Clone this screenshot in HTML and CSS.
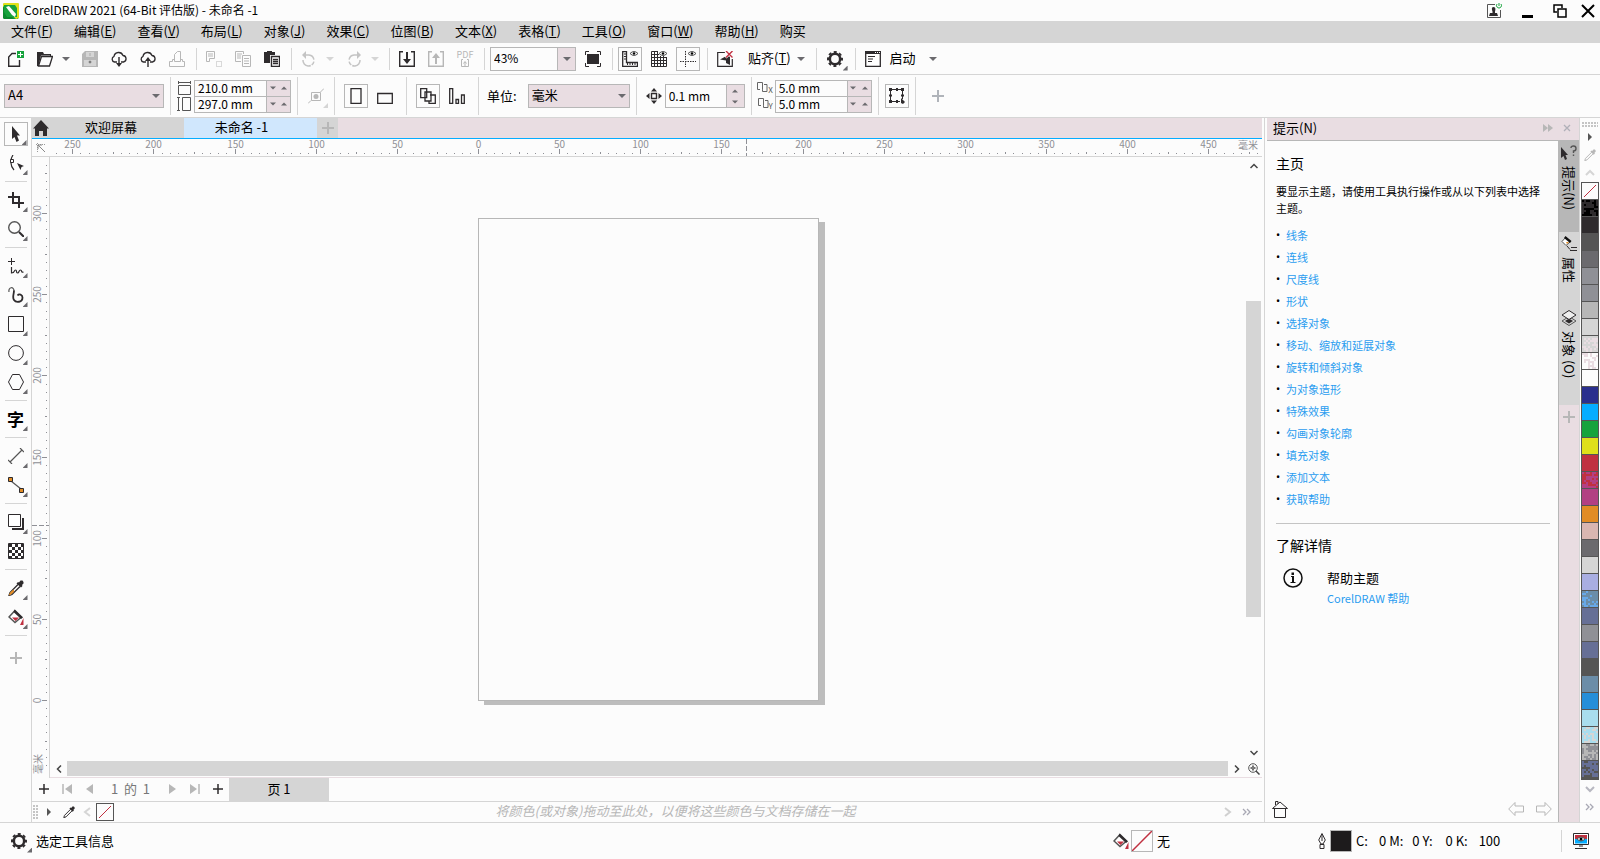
FILE: index.html
```
<!DOCTYPE html>
<html lang="zh-CN">
<head>
    <meta charset="utf-8">
    <meta name="viewport" content="width=device-width, initial-scale=1.0">
    <title>CorelDRAW 2021</title>
    <link rel="stylesheet" href="styles.css">
</head>

<body>
    <svg class="symbols" aria-hidden="true">
        <symbol id="gear" viewBox="0 0 16 16">
            <circle cx="8" cy="8" r="5.200" fill="none" stroke="#2e2b2d" stroke-width="2.600" />
            <circle cx="8" cy="8" r="7" fill="none" stroke="#2e2b2d" stroke-width="2" stroke-dasharray="3 2.500" stroke-dashoffset="1.500" />
        </symbol>
        <symbol id="bucket" viewBox="0 0 16 16">
            <path d="M7 1.500L1 8l6 5.500L13.500 8z" fill="#fff" stroke="#555" stroke-width="1.500" />
            <path d="M6.500 0.500L15 8.500l-2 1.500L5.500 3z" fill="#2e2b2d" />
            <path d="M4 8.500h7L7.500 12zM15.500 9v7H12z" fill="#c03040" />
        </symbol>
        <symbol id="down" viewBox="0 0 8 8">
            <path d="M0 2h8L4 6z" fill="currentColor" />
        </symbol>
        <symbol id="up" viewBox="0 0 8 8">
            <path d="M0 6h8L4 2z" fill="currentColor" />
        </symbol>
        <symbol id="dropper" viewBox="0 0 16 16">
            <path d="M10 4.500L2 12.500l-1 3 3-1 8-8" fill="none" stroke="currentColor" stroke-width="1.300" />
            <path d="M8.500 3.500L10 2l1 .5L12.500.5h2L15.500 2v1.500L14 5l.5 1L13 7.500z" fill="currentColor" />
        </symbol>
        <symbol id="dup" viewBox="0 0 11 12">
            <path d="M3 7.500H.5v-7h5v7H5M7 2.500h3v7H5.500v-2" fill="none" stroke="#666" />
        </symbol>
    </svg>

    <header class="titlebar">
        <svg width="16" height="16" viewBox="0 0 16 16">
            <path d="M1 0h14l1 2v12l-1 2H1l-1-2V2z" fill="#16a33c" />
            <path d="M0 3V1l1-1h14l1 1v14l-3 1z" fill="#dfe01a" />
            <path d="M0 4l11 12H1l-1-1z" fill="#0b8a2e" />
            <path d="M1 2h11l2 3v9H4L1 9z" fill="#16a33c" />
            <path d="M3 4l3-1 7 8-1 3-3-2z" fill="#fcfcfc" />
        </svg>
        <h1>CorelDRAW 2021 (64-Bit 评估版) - 未命名 -1</h1>
        <button class="win" aria-label="账户"><svg width="16" height="16" viewBox="0 0 16 16">
                <path d="M9 1.500H1.500v13h13V7" fill="none" stroke="#555" />
                <path d="M7.500 4C5 4 6 7 6.500 8.500V10H4l-1 3h9l-1-3H9V8.500C9.500 7 10 4 7.500 4z" fill="#2e2b2d" />
                <path d="M13 0v3M11 1a2.500 2.500 0 1 0 4 0" fill="none" stroke="#16a33c" />
            </svg></button>
        <button class="win" aria-label="最小化"><svg width="16" height="16" viewBox="0 0 16 16">
                <path d="M3 12h11v3H3z" />
            </svg></button>
        <button class="win" aria-label="还原"><svg width="16" height="16" viewBox="0 0 16 16">
                <path d="M5 9H2V2h8v3M6 6h8v8H6z" fill="none" stroke="#000" stroke-width="1.500" />
            </svg></button>
        <button class="win close" aria-label="关闭"><svg width="16" height="16" viewBox="0 0 16 16">
                <path d="M2 2l12 12M14 2L2 14" stroke="#000" stroke-width="2" />
            </svg></button>
    </header>

    <nav class="menubar">
        <button>文件(<u>F</u>)</button>
        <button>编辑(<u>E</u>)</button>
        <button>查看(<u>V</u>)</button>
        <button>布局(<u>L</u>)</button>
        <button>对象(<u>J</u>)</button>
        <button>效果(<u>C</u>)</button>
        <button>位图(<u>B</u>)</button>
        <button>文本(<u>X</u>)</button>
        <button>表格(<u>T</u>)</button>
        <button>工具(<u>O</u>)</button>
        <button>窗口(<u>W</u>)</button>
        <button>帮助(<u>H</u>)</button>
        <button>购买</button>
    </nav>

    <div class="toolbar">
        <button class="btn" aria-label="新建"><svg width="16" height="16" viewBox="0 0 16 16">
                <path d="M8 2.500H4L.7 6v9.300h10.800V9" fill="none" stroke="#2e2b2d" stroke-width="1.400" />
                <path d="M9 0h7v7H9z" fill="#16a33c" />
                <path d="M12.500 1v5M10 3.500h5" stroke="#fff" />
            </svg></button>
        <button class="btn" aria-label="打开"><svg width="16" height="16" viewBox="0 0 16 16">
                <path d="M0 1h6l1 2h7v3h-1V4.500H4L1.500 15H0z" fill="#2e2b2d" />
                <path d="M4.500 5.500h11l-3 9.500h-11z" fill="none" stroke="#2e2b2d" stroke-width="1.300" />
            </svg></button>
        <button class="drop" aria-label="最近文件"><svg width="8" height="8"><use href="#down" /></svg></button>
        <button class="btn" aria-label="保存"><svg width="16" height="16" viewBox="0 0 16 16">
                <path d="M3 0h13v16H0V3z" fill="#b7b7b7" />
                <path d="M4 1h8v5H4zM2 9h12v6H2z" fill="#d5d5d5" />
                <path d="M8 2v3M7 10h2v2H7z" stroke="#aaa" />
            </svg></button>
        <button class="btn" aria-label="从云端打开"><svg width="16" height="16" viewBox="0 0 16 16">
                <path d="M6 11H3.500a3 3 0 0 1-.5-5.700A4.700 4.700 0 0 1 12 4.500a3.300 3.300 0 0 1 .5 6.500H10" fill="none" stroke="#2e2b2d" stroke-width="1.300" />
                <path d="M7.300 6h1.400v6H11l-3 4-3-4h2.300z" fill="#2e2b2d" />
            </svg></button>
        <button class="btn" aria-label="保存到云端"><svg width="16" height="16" viewBox="0 0 16 16">
                <path d="M6 11H3.500a3 3 0 0 1-.5-5.700A4.700 4.700 0 0 1 12 4.500a3.300 3.300 0 0 1 .5 6.500H10" fill="none" stroke="#2e2b2d" stroke-width="1.300" />
                <path d="M7.300 16h1.400v-6H11L8 6l-3 4h2.300z" fill="#2e2b2d" />
            </svg></button>
        <button class="btn" aria-label="打印"><svg width="16" height="16" viewBox="0 0 16 16">
                <path d="M5.500 10.500v-7l3-3h3v10h-6M5.500 8.500h-2v2h-3v5h15v-5h-2v-2h-2" fill="none" stroke="#b7b7b7" />
            </svg></button>
        <span class="sep"></span>
        <button class="btn" aria-label="剪切"><svg width="16" height="16" viewBox="0 0 16 16">
                <path d="M.5.500h8v7h-5v3h-3zM2 3h5M2 5h5" fill="none" stroke="#b7b7b7" />
                <path d="M10.500 10.500h5v5h-5z" fill="none" stroke="#b7b7b7" stroke-dasharray="1 1" />
            </svg></button>
        <button class="btn" aria-label="复制"><svg width="16" height="16" viewBox="0 0 16 16">
                <path d="M6 10.500H.5V.5h8V3M2 3h5M2 5h4M2 7h4M7.500 4.500h8v11h-8zM9 7.500h5M9 10h5M9 12.500h5" fill="none" stroke="#b7b7b7" />
            </svg></button>
        <button class="btn" aria-label="粘贴"><svg width="16" height="16" viewBox="0 0 16 16">
                <path d="M0 1h3V0h5v1h3v3H6v8H0z" fill="#2e2b2d" />
                <path d="M7.500 5.500h8v10h-8zM9 8.500h5M9 10.500h5M9 12.500h5" fill="#fff" stroke="#2e2b2d" stroke-width="1.400" />
            </svg></button>
        <span class="sep"></span>
        <button class="btn" aria-label="撤消"><svg width="16" height="16" viewBox="0 0 16 16">
                <path d="M3 4h5a5.500 5.500 0 1 1-6 5" fill="none" stroke="#c4c4c4" stroke-width="1.500" stroke-dasharray="12 2 4 1" />
                <path d="M5 0v8L1 4z" fill="#c4c4c4" />
            </svg></button>
        <button class="drop off" aria-label="撤消列表"><svg width="8" height="8"><use href="#down" /></svg></button>
        <button class="btn" aria-label="重做"><svg width="16" height="16" viewBox="0 0 16 16">
                <path d="M13 4H8a5.500 5.500 0 1 0 6 5" fill="none" stroke="#c4c4c4" stroke-width="1.500" stroke-dasharray="12 2 4 1" />
                <path d="M11 0v8l4-4z" fill="#c4c4c4" />
            </svg></button>
        <button class="drop off" aria-label="重做列表"><svg width="8" height="8"><use href="#down" /></svg></button>
        <span class="sep"></span>
        <button class="btn" aria-label="导入"><svg width="16" height="16" viewBox="0 0 16 16">
                <path d="M4 .7H.7v14.600h14.600V.7H12" fill="none" stroke="#2e2b2d" stroke-width="1.400" />
                <path d="M7 1h2v7h3l-4 5-4-5h3z" fill="#2e2b2d" />
            </svg></button>
        <button class="btn" aria-label="导出"><svg width="16" height="16" viewBox="0 0 16 16">
                <path d="M4 .7H.7v14.600h14.600V.7H12" fill="none" stroke="#b7b7b7" stroke-width="1.400" />
                <path d="M7 13h2V7h3L8 2 4 7h3z" fill="#b7b7b7" />
            </svg></button>
        <button class="btn pdf" aria-label="发布为 PDF"><span>PDF</span><svg width="8" height="8" viewBox="0 0 8 8">
                <path d="M2 .5H.5v7h7v-7H6M4 7V3M2.500 4.500L4 2.500l1.500 2" fill="none" stroke="#b7b7b7" />
            </svg></button>
        <span class="sep"></span>
        <div class="combo zoom">
            <input type="text" value="43%" aria-label="缩放级别">
            <button aria-label="缩放列表"><svg width="8" height="8"><use href="#down" /></svg></button>
        </div>
        <button class="btn" aria-label="全屏预览"><svg width="16" height="16" viewBox="0 0 16 16">
                <path d="M2 3h12v10H2z" fill="#2e2b2d" />
                <path d="M4 .5H.5V4M12 .5h3.500V4M4 15.500H.5V12M12 15.500h3.500V12" fill="none" stroke="#2e2b2d" />
            </svg></button>
        <span class="sep"></span>
        <button class="btn boxed" aria-label="显示标尺"><svg width="16" height="16" viewBox="0 0 16 16">
                <path d="M.7.500h3.800v11h11v3.800H.7z" fill="none" stroke="#2e2b2d" stroke-width="1.300" />
                <path d="M2 3h2M2 5.500h2M2 8h2M5.500 12v2M8 12v2M10.500 12v2M13 12v2" stroke="#2e2b2d" />
                <path d="M8 2.500q4-4 8 0-4 4-8 0z" fill="none" stroke="#555" /><circle cx="12" cy="2.500" r="1.200" />
            </svg></button>
        <button class="btn" aria-label="显示网格"><svg width="16" height="16" viewBox="0 0 16 16">
                <path d="M7 .5H.5v15h15V6M3.500 0v16M6.500 0v16M9.500 5v11M12.500 5v11M0 3.500h8M0 6.500h16M0 9.500h16M0 12.500h16" fill="none" stroke="#2e2b2d" />
                <path d="M8 2.500q4-4 8 0-4 4-8 0z" fill="#fff" stroke="#555" /><circle cx="12" cy="2.500" r="1.200" />
            </svg></button>
        <button class="btn boxed" aria-label="显示辅助线"><svg width="16" height="16" viewBox="0 0 16 16">
                <path d="M5.500 0v16M0 10.500h16" stroke="#2e2b2d" stroke-dasharray="1.500 1" />
                <path d="M8 2.500q4-4 8 0-4 4-8 0z" fill="none" stroke="#555" /><circle cx="12" cy="2.500" r="1.200" />
            </svg></button>
        <span class="sep"></span>
        <button class="btn" aria-label="关闭贴齐"><svg width="16" height="16" viewBox="0 0 16 16">
                <path d="M8 1.500H.7v13.800h14.600V8" fill="none" stroke="#2e2b2d" stroke-width="1.200" />
                <path d="M3 8.500L13 3v11L9 12V9.500z" fill="#2e2b2d" />
                <path d="M8.500 0l7 6.500M15.500 0l-7 6.500" stroke="#fff" stroke-width="3" />
                <path d="M9 0l6.500 6.500M15.500 0L9 6.500" stroke="#c03040" stroke-width="1.400" />
            </svg></button>
        <button class="textbtn">贴齐(<u>T</u>)</button>
        <button class="drop" aria-label="贴齐选项"><svg width="8" height="8"><use href="#down" /></svg></button>
        <span class="sep"></span>
        <button class="btn wide fly" aria-label="选项"><svg width="16" height="16"><use href="#gear" /></svg></button>
        <span class="sep"></span>
        <button class="btn" aria-label="应用程序启动器"><svg width="16" height="16" viewBox="0 0 16 16">
                <path d="M.7.700h14.600v14.600H.7z" fill="#fff" stroke="#2e2b2d" stroke-width="1.300" />
                <path d="M0 0h16v3H0z" fill="#2e2b2d" />
                <path d="M10 1.500h1M12 1.500h1M14 1.500h1" stroke="#fff" />
                <path d="M3 5.500h7M3 8h5M3 10.500h4" stroke="#2e2b2d" />
            </svg></button>
        <button class="textbtn launch">启动</button>
        <button class="drop" aria-label="启动列表"><svg width="8" height="8"><use href="#down" /></svg></button>
    </div>

    <div class="propbar">
        <div class="pick paper">
            <select aria-label="页面大小">
                <option>A4</option>
            </select>
            <svg width="8" height="8"><use href="#down" /></svg>
        </div>
        <span class="sep"></span>
        <div class="pair">
            <div class="pairicons">
                <svg width="15" height="14" viewBox="0 0 15 14">
                    <path d="M1.500 4.500h12v9h-12z" fill="none" stroke="#555" />
                    <path d="M1 1.500h13M1.500 0v3M13.500 0v3" stroke="#555" />
                </svg>
                <svg width="15" height="14" viewBox="0 0 15 14">
                    <path d="M5.500.500h8v13h-8z" fill="none" stroke="#555" />
                    <path d="M1.500 1v12M0 .5h3M0 13.500h3" stroke="#555" />
                </svg>
            </div>
            <div class="fields">
                <div class="field"><input type="text" value="210.0 mm" aria-label="页面宽度"><button aria-label="减"><svg width="6" height="6"><use href="#down" /></svg></button><button aria-label="增"><svg width="6" height="6"><use href="#up" /></svg></button></div>
                <div class="field"><input type="text" value="297.0 mm" aria-label="页面高度"><button aria-label="减"><svg width="6" height="6"><use href="#down" /></svg></button><button aria-label="增"><svg width="6" height="6"><use href="#up" /></svg></button></div>
            </div>
        </div>
        <span class="sep"></span>
        <button class="btn fly pale" aria-label="自动适合页面"><svg width="16" height="16" viewBox="0 0 16 16">
                <path d="M3.500 4.500h9v8h-9zM0 15.500l3-3M12.500 4L16 .5" fill="none" stroke="#b7b7b7" />
                <circle cx="8" cy="8.500" r="2.500" fill="#b7b7b7" />
            </svg></button>
        <span class="sep"></span>
        <div class="group">
            <button class="btn boxed" aria-label="纵向"><svg width="16" height="16" viewBox="0 0 16 16">
                    <path d="M3 .7h10v14.600H3z" fill="none" stroke="#2e2b2d" stroke-width="1.300" />
                </svg></button>
            <button class="btn" aria-label="横向"><svg width="16" height="16" viewBox="0 0 16 16">
                    <path d="M.7 5.500h14.600v10H.7z" fill="none" stroke="#2e2b2d" stroke-width="1.300" />
                </svg></button>
        </div>
        <span class="sep"></span>
        <div class="group">
            <button class="btn boxed" aria-label="所有页面"><svg width="16" height="16" viewBox="0 0 16 16">
                    <path d="M.7.700h6v9h-6zM5 10V4h6v9H5zM10 7h5.300v8.300H9V13" fill="none" stroke="#2e2b2d" stroke-width="1.300" />
                </svg></button>
            <button class="btn" aria-label="当前页面"><svg width="16" height="16" viewBox="0 0 16 16">
                    <path d="M.7.700h3v14.600h-3zM7 11.500h2.500v3.800H7zM12.500 7h2.800v8.300h-2.800z" fill="none" stroke="#2e2b2d" stroke-width="1.300" />
                </svg></button>
        </div>
        <span class="sep"></span>
        <div class="units">
            <label for="units">单位:</label>
            <div class="pick unit">
                <select id="units">
                    <option>毫米</option>
                </select>
                <svg width="8" height="8"><use href="#down" /></svg>
            </div>
        </div>
        <span class="sep"></span>
        <div class="nudge">
            <svg width="16" height="16" viewBox="0 0 16 16">
                <path d="M5.500 5.500h5v5h-5z" fill="none" stroke="#2e2b2d" stroke-width="1.400" />
                <path d="M8 0l3 3.500H5zM8 16l3-3.500H5zM0 8l3.500-3v6zM16 8l-3.500-3v6z" fill="#2e2b2d" />
            </svg>
            <div class="spin">
                <input type="text" value="0.1 mm" aria-label="微调距离">
                <div class="spinbtns"><button aria-label="增"><svg width="6" height="6"><use href="#up" /></svg></button><button aria-label="减"><svg width="6" height="6"><use href="#down" /></svg></button></div>
            </div>
        </div>
        <span class="sep"></span>
        <div class="pair">
            <div class="pairicons axis">
                <span><svg width="11" height="12"><use href="#dup" /></svg>X</span>
                <span><svg width="11" height="12"><use href="#dup" /></svg>Y</span>
            </div>
            <div class="fields">
                <div class="field"><input type="text" value="5.0 mm" aria-label="再制距离 X"><button aria-label="减"><svg width="6" height="6"><use href="#down" /></svg></button><button aria-label="增"><svg width="6" height="6"><use href="#up" /></svg></button></div>
                <div class="field"><input type="text" value="5.0 mm" aria-label="再制距离 Y"><button aria-label="减"><svg width="6" height="6"><use href="#down" /></svg></button><button aria-label="增"><svg width="6" height="6"><use href="#up" /></svg></button></div>
            </div>
        </div>
        <span class="sep"></span>
        <button class="btn boxed" aria-label="视为已填充"><svg width="16" height="16" viewBox="0 0 16 16">
                <path d="M2 1.500h11.500V11M11 13.500H1.500V2" fill="none" stroke="#2e2b2d" />
                <path d="M0 0h3v3H0zM7 0h2v3H7zM12 0h3v3h-3zM0 12h3v3H0zM7 12h2v3H7zM0 6.500h3v2H0zM12 6.500h3v2h-3zM12 10l4 4-2 2-2-1z" fill="#2e2b2d" />
            </svg></button>
        <span class="sep"></span>
        <button class="btn more" aria-label="自定义"><svg width="14" height="14" viewBox="0 0 14 14">
                <path d="M7 1v12M1 7h12" stroke="#b0b4ba" stroke-width="2" />
            </svg></button>
    </div>

    <main class="workspace">
        <aside class="toolbox">
            <button class="btn boxed fly" aria-label="选择"><svg width="16" height="16" viewBox="0 0 16 16">
                    <path d="M4 0l8 9.500H9l2 5L8.500 16l-2-5L4 13z" fill="#2e2b2d" />
                </svg></button>
            <button class="btn fly" aria-label="形状"><svg width="16" height="16" viewBox="0 0 16 16">
                    <path d="M5 0C2 4 2 11 6 15" fill="none" stroke="#2e2b2d" stroke-width="1.200" />
                    <path d="M2.500 4.500h3v3h-3z" fill="#fff" stroke="#2e2b2d" />
                    <path d="M9 8l7 3-2.500 1-1 3z" fill="#2e2b2d" />
                </svg></button>
            <span class="sep"></span>
            <button class="btn fly" aria-label="裁剪"><svg width="16" height="16" viewBox="0 0 16 16">
                    <path d="M5 0v11h11M0 5h11v11" fill="none" stroke="#2e2b2d" stroke-width="2" />
                </svg></button>
            <button class="btn fly" aria-label="缩放"><svg width="16" height="16" viewBox="0 0 16 16">
                    <circle cx="6.500" cy="6.500" r="5.800" fill="none" stroke="#555" stroke-width="1.400" />
                    <path d="M11 11l5 5" stroke="#2e2b2d" stroke-width="2" />
                </svg></button>
            <span class="sep"></span>
            <button class="btn fly" aria-label="手绘"><svg width="16" height="16" viewBox="0 0 16 16">
                    <path d="M3.500 0v7M0 3.500h7" stroke="#2e2b2d" />
                    <path d="M3.500 9v6c4 0 2-3 4-3s0 3 2 3 1-3 3-3 0 3 3 2" fill="none" stroke="#2e2b2d" stroke-width="1.200" />
                </svg></button>
            <button class="btn fly" aria-label="艺术笔"><svg width="16" height="16" viewBox="0 0 16 16">
                    <path d="M1 5C0 0 6-1 6 4" fill="none" stroke="#555" stroke-width="1.200" />
                    <path d="M6 3.500c0 4-2 6.500 0 9.500s8.500 2.500 8.500-2.500c0-3-3.500-4-5-2" fill="none" stroke="#2e2b2d" stroke-width="1.800" />
                </svg></button>
            <button class="btn fly" aria-label="矩形"><svg width="16" height="16" viewBox="0 0 16 16">
                    <path d="M.5.500h15v15H.5z" fill="none" stroke="#2e2b2d" />
                </svg></button>
            <button class="btn fly" aria-label="椭圆形"><svg width="16" height="16" viewBox="0 0 16 16">
                    <circle cx="8" cy="8" r="7.400" fill="none" stroke="#2e2b2d" />
                </svg></button>
            <button class="btn fly" aria-label="多边形"><svg width="16" height="16" viewBox="0 0 16 16">
                    <path d="M4.500.500h7l4 7.500-4 7.500h-7L.5 8z" fill="none" stroke="#2e2b2d" />
                </svg></button>
            <span class="sep"></span>
            <button class="btn fly glyph" aria-label="文本">字</button>
            <span class="sep"></span>
            <button class="btn fly" aria-label="平行度量"><svg width="16" height="16" viewBox="0 0 16 16">
                    <path d="M2 14L14 2M0 12l4 4M12 0l4 4" stroke="#555" stroke-width="1.200" />
                </svg></button>
            <button class="btn fly" aria-label="连接器"><svg width="16" height="16" viewBox="0 0 16 16">
                    <path d="M3 4l10 8" stroke="#555" stroke-width="1.300" />
                    <path d="M.5.500h4v4h-4zM11.500 11.500h4v4h-4z" fill="#e18c25" stroke="#2e2b2d" />
                </svg></button>
            <span class="sep"></span>
            <button class="btn fly" aria-label="阴影"><svg width="16" height="16" viewBox="0 0 16 16">
                    <path d="M15 4v11H4" fill="none" stroke="#2e2b2d" stroke-width="2" />
                    <path d="M.5.500h12v12H.5z" fill="#fff" stroke="#2e2b2d" />
                </svg></button>
            <button class="btn" aria-label="透明度"><svg width="16" height="16" viewBox="0 0 16 16">
                    <path d="M.5.500h15v15H.5z" fill="#fff" stroke="#2e2b2d" />
                    <path d="M1 2.500h14M1 8.500h14M1 14.500h14" stroke="#2e2b2d" stroke-width="3" stroke-dasharray="3" />
                    <path d="M4 5.500h11M4 11.500h11" stroke="#2e2b2d" stroke-width="3" stroke-dasharray="3" />
                </svg></button>
            <span class="sep"></span>
            <button class="btn fly" aria-label="颜色滴管"><svg class="ink" width="16" height="16" viewBox="0 0 16 16">
                    <use href="#dropper" width="16" height="16" />
                    <path d="M1.500 15l1-2.500 3-2.500v2z" fill="#e18c25" stroke="#e18c25" />
                </svg></button>
            <button class="btn fly" aria-label="交互式填充"><svg width="16" height="16"><use href="#bucket" /></svg></button>
            <span class="sep"></span>
            <button class="btn more" aria-label="自定义"><svg width="14" height="14" viewBox="0 0 14 14">
                    <path d="M7 1v12M1 7h12" stroke="#b7b7b7" stroke-width="2" />
                </svg></button>
        </aside>

        <section class="document">
            <div class="tabs">
                <button class="home" aria-label="主页"><svg width="16" height="16" viewBox="0 0 16 16">
                        <path d="M8 0l8 8.500h-2V16h-4v-5H6v5H2V8.500H0z" fill="#2e2b2d" />
                    </svg></button>
                <button class="tab">欢迎屏幕</button>
                <button class="tab active">未命名 -1</button>
                <button class="add" aria-label="新建文档"><svg width="12" height="12" viewBox="0 0 12 12">
                        <path d="M6 0v12M0 6h12" stroke="#b7b7b7" stroke-width="2" />
                    </svg></button>
            </div>
            <div class="topruler">
                <button class="origin" aria-label="标尺原点"><svg width="10" height="10" viewBox="0 0 10 10">
                        <path d="M0 1.500h10M1.500 0v10" stroke="#999" stroke-dasharray="1 1" />
                        <path d="M2 2l7 7M2 6V2h4" fill="none" stroke="#888" />
                    </svg></button>
                <svg class="hruler" id="hruler"></svg>
                <span class="unitname">毫米</span>
            </div>
            <div class="middle">
                <div class="leftruler">
                    <svg class="vruler" id="vruler"></svg>
                    <span class="unitname upright">毫米</span>
                </div>
                <div class="view">
                    <div class="canvasrow">
                        <div class="canvas">
                            <div class="page"></div>
                        </div>
                        <div class="vscroll">
                            <button aria-label="向上滚动"><svg width="8" height="8" viewBox="0 0 8 8"><path d="M.5 6L4 2.500 7.500 6" /></svg></button>
                            <div class="track"><div class="thumb"></div></div>
                            <button aria-label="向下滚动"><svg width="8" height="8" viewBox="0 0 8 8"><path d="M.5 2L4 5.500 7.500 2" /></svg></button>
                        </div>
                    </div>
                    <div class="hscroll">
                        <button aria-label="向左滚动"><svg width="8" height="8" viewBox="0 0 8 8"><path d="M6 .5L2.500 4 6 7.500" /></svg></button>
                        <div class="thumb"></div>
                        <button aria-label="向右滚动"><svg width="8" height="8" viewBox="0 0 8 8"><path d="M2 .5L5.500 4 2 7.500" /></svg></button>
                        <button class="navigator" aria-label="导航器"><svg width="12" height="12" viewBox="0 0 12 12">
                                <circle cx="5" cy="5" r="4.300" fill="none" stroke="#555" />
                                <path d="M5 2.500v5M2.500 5h5" stroke="#555" stroke-width="2" stroke-dasharray="2 1" /><path d="M8 8l3.500 3.500" stroke="#555" stroke-width="1.500" />
                            </svg></button>
                    </div>
                </div>
            </div>
            <div class="pagebar">
                <button aria-label="添加页"><svg width="10" height="10" viewBox="0 0 10 10"><path d="M5 0v10M0 5h10" stroke="#2e2b2d" stroke-width="1.500" /></svg></button>
                <button aria-label="第一页"><svg width="10" height="10" viewBox="0 0 10 10"><path d="M1 0v10" stroke="#b7b7b7" stroke-width="1.500" /><path d="M10 0v10L3 5z" fill="#b7b7b7" /></svg></button>
                <button aria-label="上一页"><svg width="10" height="10" viewBox="0 0 10 10"><path d="M8 0v10L1 5z" fill="#b7b7b7" /></svg></button>
                <span class="count">1&nbsp; 的 &nbsp;1</span>
                <button aria-label="下一页"><svg width="10" height="10" viewBox="0 0 10 10"><path d="M2 0v10l7-5z" fill="#b7b7b7" /></svg></button>
                <button aria-label="最后一页"><svg width="10" height="10" viewBox="0 0 10 10"><path d="M9 0v10" stroke="#b7b7b7" stroke-width="1.500" /><path d="M0 0v10l7-5z" fill="#b7b7b7" /></svg></button>
                <button aria-label="在后面添加页"><svg width="10" height="10" viewBox="0 0 10 10"><path d="M5 0v10M0 5h10" stroke="#2e2b2d" stroke-width="1.500" /></svg></button>
                <button class="pagetab">页 1</button>
            </div>
            <div class="docpalette">
                <span class="grip tall"></span>
                <button aria-label="调色板菜单"><svg width="8" height="8" viewBox="0 0 8 8"><path d="M2 0l4 4-4 4z" fill="#555" /></svg></button>
                <button class="ink" aria-label="滴管"><svg width="12" height="12"><use href="#dropper" /></svg></button>
                <button class="prev" aria-label="向前"><svg width="10" height="10" viewBox="0 0 10 10"><path d="M7 1L2 5l5 4" fill="none" stroke="#d5d5d5" stroke-width="2" /></svg></button>
                <button class="none" aria-label="无颜色"><svg width="16" height="16" viewBox="0 0 16 16"><path d="M2 14L14 2" stroke="#c03040" /></svg></button>
                <p>将颜色(或对象)拖动至此处，以便将这些颜色与文档存储在一起</p>
                <button aria-label="向后"><svg width="10" height="10" viewBox="0 0 10 10"><path d="M3 1l5 4-5 4" fill="none" stroke="#d0d0d0" stroke-width="2" /></svg></button>
                <button aria-label="展开"><svg width="10" height="10" viewBox="0 0 10 10"><path d="M1 2l3 3-3 3M5 2l3 3-3 3" fill="none" stroke="#a8a8b4" stroke-width="1.300" /></svg></button>
            </div>
        </section>

        <section class="docker">
            <div class="dockhead">
                <h2>提示(N)</h2>
                <button aria-label="折叠"><svg width="10" height="10" viewBox="0 0 10 10"><path d="M0 1l5 4-5 4zM5 1l5 4-5 4z" fill="#b7b7b7" /></svg></button>
                <button aria-label="关闭面板"><svg width="8" height="8" viewBox="0 0 8 8"><path d="M1 1l6 6M7 1L1 7" stroke="#b0b0b8" stroke-width="1.300" /></svg></button>
            </div>
            <div class="dockbody">
                <article class="hints">
                    <h3>主页</h3>
                    <p>要显示主题，请使用工具执行操作或从以下列表中选择主题。</p>
                    <ul>
                        <li><a href="#">线条</a></li>
                        <li><a href="#">连线</a></li>
                        <li><a href="#">尺度线</a></li>
                        <li><a href="#">形状</a></li>
                        <li><a href="#">选择对象</a></li>
                        <li><a href="#">移动、缩放和延展对象</a></li>
                        <li><a href="#">旋转和倾斜对象</a></li>
                        <li><a href="#">为对象造形</a></li>
                        <li><a href="#">特殊效果</a></li>
                        <li><a href="#">勾画对象轮廓</a></li>
                        <li><a href="#">填充对象</a></li>
                        <li><a href="#">添加文本</a></li>
                        <li><a href="#">获取帮助</a></li>
                    </ul>
                    <h3 class="learn">了解详情</h3>
                    <div class="help">
                        <svg width="20" height="20" viewBox="0 0 20 20">
                            <circle cx="10" cy="10" r="9" fill="none" stroke="#111" stroke-width="1.500" />
                            <path d="M8 8h3v6h1.500v1h-5v-1H9V9H8zM8.500 4.500h2.500V7H8.500z" fill="#111" />
                        </svg>
                        <div>
                            <h4>帮助主题</h4>
                            <a href="#">CorelDRAW 帮助</a>
                        </div>
                    </div>
                    <div class="hintnav">
                        <button aria-label="主页"><svg width="16" height="17" viewBox="0 0 16 17"><path d="M2.500 7.500h11v9h-11zM.5 7.500L8 1l7.500 6.500zM3.500 4V.5H6V3" fill="none" stroke="#2e2b2d" /></svg></button>
                        <button aria-label="后退"><svg width="16" height="16" viewBox="0 0 16 16"><path d="M.7 8L7 1.500V5h8.500v6H7v3.500z" fill="none" stroke="#b7b7b7" /></svg></button>
                        <button aria-label="前进"><svg width="16" height="16" viewBox="0 0 16 16"><path d="M15.300 8L9 1.500V5H.5v6H9v3.500z" fill="none" stroke="#b7b7b7" /></svg></button>
                    </div>
                </article>
                <div class="docktabs">
                    <button class="docktab current"><svg width="16" height="16" viewBox="0 0 16 16">
                            <path d="M0 2l7 8H4.500l1.500 4-2 1-1.500-4L0 13z" fill="#2e2b2d" />
                            <path d="M10 3q0-2 2.500-2T15 3.500 12.500 6v2M12.500 9.500V11" fill="none" stroke="#555" stroke-width="1.400" />
                        </svg><span>提示(N)</span></button>
                    <button class="docktab"><svg width="16" height="16" viewBox="0 0 16 16">
                            <path d="M5 1L1 5.500l4 4 4.500-4z" fill="#fff" stroke="#555" />
                            <path d="M4.500 0l6 5-1.500 2-6-5z" fill="#111" />
                            <path d="M5 6h3L6 8z" fill="#e18c25" />
                            <path d="M6 10l3 3.500M10 11.500h6M9 14.500h7" stroke="#2e2b2d" />
                        </svg><span>属性</span></button>
                    <button class="docktab"><svg width="16" height="16" viewBox="0 0 16 16">
                            <path d="M8 15.500L1 11l7-4.500 7 4.500z" fill="#d5d5d5" stroke="#555" />
                            <path d="M8 13.500L4 11l4-2.500 4 2.500z" fill="#2e2b2d" />
                            <path d="M8 9.500L1 5l7-4.500L15 5z" fill="#eee" stroke="#2e2b2d" />
                        </svg><span>对象 (O)</span></button>
                    <button class="dockadd" aria-label="添加面板"><svg width="12" height="12" viewBox="0 0 12 12">
                            <path d="M6 0v12M0 6h12" stroke="#b7b7b7" stroke-width="2" />
                        </svg></button>
                </div>
            </div>
        </section>

        <aside class="palette">
            <span class="grip"></span>
            <button aria-label="调色板菜单"><svg width="8" height="8" viewBox="0 0 8 8"><path d="M2 0l4 4-4 4z" fill="#555" /></svg></button>
            <button class="faded" aria-label="滴管"><svg width="12" height="12"><use href="#dropper" /></svg></button>
            <button aria-label="向上"><svg width="10" height="10" viewBox="0 0 10 10"><path d="M1 7l4-4 4 4" fill="none" stroke="#d5d5d5" stroke-width="2" /></svg></button>
            <div class="swatches" id="swatches"></div>
            <button aria-label="向下"><svg width="10" height="10" viewBox="0 0 10 10"><path d="M1 3l4 4 4-4" fill="none" stroke="#b7b7c0" stroke-width="2" /></svg></button>
            <button aria-label="展开"><svg width="10" height="10" viewBox="0 0 10 10"><path d="M1 2l3 3-3 3M5 2l3 3-3 3" fill="none" stroke="#a8a8b4" stroke-width="1.300" /></svg></button>
        </aside>
    </main>

    <footer class="statusbar">
        <button class="btn wide fly" aria-label="状态栏选项"><svg width="16" height="16"><use href="#gear" /></svg></button>
        <span class="info">选定工具信息</span>
        <div class="fill">
            <svg width="16" height="16"><use href="#bucket" /></svg>
            <svg class="nofill" width="20" height="20" viewBox="0 0 20 20"><path d="M0 20L20 0" stroke="#c03040" stroke-width="1.500" /></svg>
            <span>无</span>
        </div>
        <div class="outline">
            <svg width="8" height="16" viewBox="0 0 8 16">
                <path d="M4 .5L.7 7 3 11h2l2.300-4zM4 2v6M2 11.500h4v4H2z" fill="none" stroke="#2e2b2d" />
            </svg>
            <span class="ink-color"></span>
            <span class="cmyk"><b>C:</b><i>0</i><b>M:</b><i>0</i><b>Y:</b><i>0</i><b>K:</b><i>100</i></span>
        </div>
        <button class="proof" aria-label="校样颜色"><svg width="16" height="16" viewBox="0 0 16 16">
                <path d="M.5.500h15v11H.5z" fill="#fff" stroke="#2e2b2d" />
                <path d="M2 2h12v4H2z" fill="#c03040" />
                <path d="M2 6h12v4.500H2z" fill="#05adff" />
                <path d="M4 6q4-4 8 0-4 4-8 0z" fill="#fff" stroke="#555" /><circle cx="8" cy="6" r="1.500" />
                <path d="M6 13h4M2 15.500h12" stroke="#2e2b2d" />
            </svg></button>
    </footer>

    <script src="script.js"></script>
</body>
</html>
```
FILE: styles.css
```
* {
    box-sizing: border-box;
    margin: 0;
    padding: 0;
}

body {
    display: flex;
    flex-direction: column;
    height: 100vh;
    overflow: hidden;
    background-color: #fcfcfc;
    color: #000;
    font-family: "Noto Sans CJK SC", "Noto Sans", sans-serif;
    font-size: 13px;
    line-height: 20px;
}

button,
input,
select {
    border: none;
    border-radius: 0;
    background: none;
    color: inherit;
    font: inherit;
}

button {
    display: flex;
    flex: none;
    align-items: center;
    justify-content: center;
}

svg {
    flex: none;
    display: block;
}

.symbols {
    position: absolute;
    width: 0;
    height: 0;
}

/* title */
.titlebar {
    display: flex;
    flex: none;
    align-items: center;
    height: 21px;
    padding-left: 3px;
}

.titlebar h1 {
    flex: 1;
    margin-left: 5px;
    padding-bottom: 2px;
    font-size: 12px;
    font-weight: normal;
}

.win {
    width: 33px;
    height: 20px;
}

.win.close {
    width: 24px;
}

/* menu */
.menubar {
    display: flex;
    flex: none;
    gap: 21px;
    height: 22px;
    padding: 0 0 2px 11px;
    background-color: #d5d5d5;
}

/* toolbars */
.toolbar,
.propbar {
    display: flex;
    flex: none;
    align-items: center;
    border-bottom: 1px solid #d5d5d5;
}

.toolbar {
    gap: 5px;
    height: 32px;
    padding-left: 4px;
}

.propbar {
    gap: 6px;
    height: 43px;
    padding-left: 4px;
}

.btn {
    position: relative;
    width: 24px;
    height: 24px;
}

.btn.wide {
    width: 26px;
}

.boxed {
    border: 1px solid #b7b7b7;
}

.fly::after {
    content: "";
    position: absolute;
    right: 0;
    bottom: 0;
    width: 5px;
    height: 5px;
    background-color: #6b6a6e;
    clip-path: polygon(100% 0, 100% 100%, 0 100%);
}

.fly.pale::after {
    background-color: #d5d5d5;
}

.drop {
    width: 11px;
    height: 24px;
    margin: 0 2px 0 -2px;
    color: #6b6a6e;
}

.drop.off {
    color: #d5d5d5;
}

.sep {
    flex: none;
    width: 1px;
    background-color: #d5d5d5;
}

.toolbar .sep {
    height: 22px;
    margin-left: 2px;
}

.propbar .sep {
    height: 38px;
}

.pdf {
    flex-direction: column;
    color: #b7b7b7;
    font-size: 9px;
    line-height: 9px;
}

.textbtn {
    padding: 0 2px 2px 6px;
}

.launch {
    padding: 0 9px 2px 0;
}

.combo {
    display: flex;
    height: 24px;
    border: 1px solid #b7b7b7;
}

.combo input {
    flex: 1;
    min-width: 0;
    padding: 0 0 2px 3px;
    font-size: 12px;
}

.combo button {
    width: 18px;
    border-left: 1px solid #b7b7b7;
    background-color: #e9dde2;
    color: #6b6a6e;
}

.zoom {
    width: 86px;
}

.pick {
    position: relative;
    height: 24px;
    border: 1px solid #b7b7b7;
    background-color: #e9dde2;
    color: #6b6a6e;
}

.pick select {
    display: block;
    width: 100%;
    height: 100%;
    padding: 0 0 2px 3px;
    appearance: none;
    color: #000;
}

.pick svg {
    position: absolute;
    top: 7px;
    right: 3px;
    pointer-events: none;
}

.paper {
    width: 160px;
}

.unit {
    width: 102px;
}

.pair {
    display: flex;
    gap: 2px;
}

.pairicons {
    display: flex;
    flex-direction: column;
    align-items: center;
    justify-content: space-around;
    width: 15px;
}

.axis span {
    display: flex;
    align-items: flex-end;
    color: #555;
    font-size: 8px;
    line-height: 8px;
}

.fields {
    width: 97px;
    border: 1px solid #b7b7b7;
}

.field {
    display: flex;
    height: 15px;
}

.field + .field {
    height: 16px;
    border-top: 1px solid #b7b7b7;
}

.field input {
    flex: 1;
    min-width: 0;
    padding: 0 0 1px 3px;
    font-size: 12px;
    line-height: 14px;
}

.field button {
    width: 12px;
    background-color: #e9dde2;
    color: #6b6a6e;
}

.field input + button {
    border-left: 1px solid #b7b7b7;
}

.group {
    display: flex;
    gap: 5px;
    padding: 0 3px;
}

.units,
.nudge {
    display: flex;
    align-items: center;
}

.units {
    gap: 11px;
    padding-left: 2px;
}

.nudge {
    gap: 3px;
    padding-left: 3px;
}

.spin {
    display: flex;
    width: 80px;
    height: 24px;
    border: 1px solid #b7b7b7;
}

.spin input {
    flex: 1;
    min-width: 0;
    padding: 0 0 1px 3px;
    font-size: 12px;
}

.spinbtns {
    width: 18px;
    border-left: 1px solid #b7b7b7;
    background-color: #e9dde2;
    color: #6b6a6e;
}

.spinbtns button {
    width: 100%;
    height: 11px;
}

.propbar .more {
    margin-left: 4px;
}

/* main area */
.workspace {
    display: flex;
    flex: 1;
    min-height: 0;
    border-bottom: 1px solid #d5d5d5;
}

.toolbox {
    display: flex;
    flex: none;
    flex-direction: column;
    align-items: center;
    gap: 5px;
    width: 32px;
    padding-top: 4px;
    border-right: 1px solid #d5d5d5;
}

.toolbox .sep {
    width: 22px;
    height: 1px;
    margin: 1px 0;
}

.toolbox .more {
    margin-top: 4px;
}

.glyph {
    font-size: 17px;
    font-weight: bold;
}

.document {
    display: flex;
    flex: 1;
    flex-direction: column;
    min-width: 0;
    margin-right: 2px;
}

.tabs {
    display: flex;
    flex: none;
    height: 21px;
    border-bottom: 1px solid #05adff;
    background-color: #e9dde2;
}

.tabs .home {
    width: 18px;
    background-color: #d5d5d5;
}

.tab {
    width: 134px;
    padding: 0 12px 2px 0;
    background-color: #d5d5d5;
}

.tab.active {
    width: 133px;
    padding-right: 18px;
    background-color: #d0e7fd;
}

.tabs .add {
    width: 21px;
    background-color: #d5d5d5;
}

.topruler {
    display: flex;
    flex: none;
    height: 18px;
    border-bottom: 1px solid #d5d5d5;
}

.origin {
    width: 18px;
    border-right: 1px solid transparent;
}

.hruler {
    flex: 1;
    min-width: 0;
    height: 17px;
    overflow: visible;
}

.ticks {
    stroke: #8f9096;
    shape-rendering: crispEdges;
}

.number,
.unitname {
    color: #8f9096;
    fill: #8f9096;
    font-size: 10px;
}

.number {
    text-anchor: middle;
}

.unitname {
    width: 24px;
    line-height: 11px;
}

.middle {
    display: flex;
    flex: 1;
    min-height: 0;
}

.leftruler {
    display: flex;
    flex: none;
    flex-direction: column;
    width: 18px;
    border-right: 1px solid #d5d5d5;
}

.vruler {
    flex: 1;
    width: 17px;
    min-height: 0;
    overflow: visible;
}

.unitname.upright {
    width: 11px;
    height: 23px;
    margin-bottom: 4px;
    writing-mode: vertical-rl;
    text-orientation: sideways;
    transform: rotate(180deg);
}

.view {
    display: flex;
    flex: 1;
    flex-direction: column;
    min-width: 0;
}

.canvasrow {
    display: flex;
    flex: 1;
    min-height: 0;
}

.canvas {
    position: relative;
    flex: 1;
    overflow: hidden;
}

.page {
    position: absolute;
    top: 61px;
    left: 428px;
    width: 341px;
    height: 483px;
    border: 1px solid #b7b7b7;
    background-color: #fcfcfc;
    box-shadow: 6px 4px #bdbdbd;
}

.vscroll {
    display: flex;
    flex: none;
    flex-direction: column;
    width: 17px;
}

.vscroll button {
    width: 17px;
    height: 17px;
}

.hscroll button {
    width: 17px;
    height: 15px;
}

.vscroll button path,
.hscroll button path {
    fill: none;
    stroke: #444;
    stroke-width: 1.5px;
}

.track {
    display: flex;
    flex: 1;
    flex-direction: column;
    padding: 127px 1px 127px;
}

.thumb {
    flex: 1;
    background-color: #d5d5d5;
}

.hscroll {
    display: flex;
    flex: none;
    height: 17px;
    padding-bottom: 1px;
    border-bottom: 1px solid #e9dde2;
}

.pagebar {
    display: flex;
    flex: none;
    align-items: center;
    height: 24px;
    border-bottom: 1px solid #d5d5d5;
}

.pagebar button {
    width: 23px;
    height: 23px;
    padding-bottom: 2px;
}

.pagebar .count {
    width: 59px;
    padding-bottom: 2px;
    color: #777;
    text-align: center;
}

.pagebar .pagetab {
    width: 100px;
    background-color: #d5d5d5;
}

.docpalette {
    display: flex;
    flex: none;
    align-items: center;
    height: 20px;
    padding-right: 5px;
}

.docpalette button {
    width: 20px;
    height: 18px;
}

.docpalette .prev {
    width: 17px;
}

.docpalette .none {
    width: 18px;
    border: 1px solid #555;
}

.docpalette p {
    flex: 1;
    padding: 0 0 2px 20px;
    color: #b7b7b7;
    font-style: italic;
    text-align: center;
}

.grip {
    flex: none;
    height: 6px;
    width: 16px;
    background-image: radial-gradient(circle at 1px 1px, #c4c4c4 1px, transparent 1px);
    background-size: 3px 3px;
}

.grip.tall {
    width: 6px;
    height: 15px;
    margin-left: 1px;
}

.ink {
    color: #2e2b2d;
}

.faded {
    color: #b7b7b7;
}

/* hints docker */
.docker {
    display: flex;
    flex: none;
    flex-direction: column;
    width: 316px;
    padding-left: 2px;
    border-left: 1px solid #d5d5d5;
    border-right: 1px solid #d5d5d5;
}

.dockhead {
    display: flex;
    flex: none;
    align-items: center;
    height: 23px;
    padding: 0 3px 2px 6px;
    border-bottom: 1px solid #b7b7b7;
    background-color: #e9dde2;
}

.dockhead h2 {
    flex: 1;
    font-size: 13px;
    font-weight: normal;
}

.dockhead button {
    width: 19px;
    height: 20px;
}

.dockbody {
    display: flex;
    flex: 1;
    min-height: 0;
}

.hints {
    display: flex;
    flex: 1;
    flex-direction: column;
    padding: 12px 8px 4px 9px;
    font-size: 11px;
    line-height: 17px;
}

.hints h3 {
    font-size: 14px;
    font-weight: normal;
    line-height: 20px;
}

.hints p {
    margin-top: 10px;
    padding-right: 8px;
}

.hints a {
    color: #2b9cf0;
    text-decoration: none;
}

.hints ul {
    margin-top: 7px;
    padding-bottom: 13px;
    border-bottom: 1px solid #c4c4c4;
    list-style: none;
}

.hints li {
    display: flex;
    height: 22px;
    line-height: 22px;
}

.hints li::before {
    content: "•";
    width: 10px;
    font-family: "Noto Sans", sans-serif;
}

.hints .learn {
    margin-top: 11px;
}

.help {
    display: flex;
    gap: 24px;
    margin-top: 13px;
    padding-left: 7px;
}

.help h4 {
    font-size: 13px;
    font-weight: normal;
    line-height: 20px;
}

.help a {
    line-height: 20px;
}

.hintnav {
    display: flex;
    align-items: center;
    margin-top: auto;
}

.hintnav button {
    width: 28px;
    height: 18px;
}

.hintnav button:first-child {
    width: 16px;
    margin-right: auto;
    margin-left: -4px;
}

.hintnav button:last-child {
    margin-right: -8px;
}

.docktabs {
    display: flex;
    flex: none;
    flex-direction: column;
    width: 21px;
    border-left: 1px solid #b7b7b7;
    background-color: #e9dde2;
}

.docktab {
    flex-direction: column;
    justify-content: flex-start;
    gap: 5px;
    height: 74px;
    padding-top: 4px;
    background-color: #d5d5d5;
}

.docktab.current {
    height: 91px;
    background-color: #b7b7b7;
}

.docktab:nth-child(3) {
    height: 99px;
}

.docktab span {
    writing-mode: vertical-rl;
    text-orientation: sideways;
}

.dockadd {
    height: 24px;
}

/* colour strip */
.palette {
    display: flex;
    flex: none;
    flex-direction: column;
    align-items: center;
    width: 20px;
    padding-top: 4px;
}

.palette button {
    width: 20px;
    height: 18px;
}

.swatches {
    width: 18px;
    padding: 0 1px 3px;
    background-color: #555;
}

.palette .swatches button {
    width: 16px;
    height: 16px;
    margin-top: 1px;
}

/* status bar */
.statusbar {
    display: flex;
    flex: none;
    align-items: center;
    height: 36px;
    padding: 0 9px 1px 6px;
}

.info {
    flex: 1;
    margin-left: 4px;
}

.fill,
.outline {
    display: flex;
    align-items: center;
}

.fill {
    gap: 2px;
    width: 205px;
}

.nofill {
    width: 22px;
    height: 22px;
    border: 1px solid #b7b7b7;
}

.outline {
    gap: 4px;
    width: 243px;
}

.fill span {
    margin-left: 2px;
}

.ink-color {
    width: 22px;
    height: 22px;
    border: 1px solid #b7b7b7;
    background-color: #1d1b1c;
}

.cmyk {
    display: flex;
}

.cmyk b,
.cmyk i {
    font-style: normal;
    font-weight: normal;
}

.cmyk b {
    width: 23px;
}

.cmyk i {
    margin-right: 3px;
}

.proof {
    width: 30px;
    height: 22px;
    padding-left: 8px;
    border-left: 1px solid #d5d5d5;
}
```
FILE: script.js
```
const NS = "http://www.w3.org/2000/svg";
const perMm = 1.6226; // 43% zoom

function svgNode(name, attributes) {
    const node = document.createElementNS(NS, name);
    for (const key in attributes) {
        node.setAttribute(key, attributes[key]);
    }
    return node;
}

function addNumber(parent, value, x, y, turned) {
    const text = svgNode("text", { x: x, y: y, class: "number" });
    if (turned) {
        text.setAttribute("transform", `rotate(-90 ${x} ${y})`);
    }
    text.textContent = Math.abs(value);
    parent.appendChild(text);
}

function tickSize(mm) {
    if (mm % 50 == 0) return 5;
    return mm % 25 == 0 ? 2 : 1;
}

function drawTopRuler() {
    const ruler = document.querySelector("#hruler");
    const length = ruler.getBoundingClientRect().width;
    const zero = 428;
    let d = "";
    for (let mm = -260; mm <= 1000; mm += 5) {
        const x = Math.round(zero + mm * perMm) + 0.5;
        if (x < 2 || x > length + 20) continue;
        const size = tickSize(mm);
        d += `M${x} ${15 - size}V15`;
        if (size == 5 && x < length - 8) addNumber(ruler, mm, x, 9, false);
    }
    ruler.appendChild(svgNode("path", { d: d, class: "ticks" }));
    ruler.appendChild(svgNode("path", { d: "M696.5 0V17", class: "ticks", "stroke-dasharray": "5 2" }));
}

function drawSideRuler() {
    const ruler = document.querySelector("#vruler");
    const length = ruler.getBoundingClientRect().height;
    const zero = 543;
    let d = "";
    for (let mm = -200; mm <= 340; mm += 5) {
        const y = Math.round(zero - mm * perMm) + 0.5;
        if (y < 2 || y > length + 20) continue;
        const size = tickSize(mm);
        d += `M${15 - size} ${y}H15`;
        if (size == 5) addNumber(ruler, mm, 9, y, true);
    }
    ruler.appendChild(svgNode("path", { d: d, class: "ticks" }));
    ruler.appendChild(svgNode("path", { d: "M0 368.5H17", class: "ticks", "stroke-dasharray": "5 2" }));
}

// a second colour makes the swatch speckled
const colours = [
    ["none"], ["#2e2b2d", "#000"], ["#2e2b2d"], ["#555"], ["#6b6a6e"], ["#8f9096"], ["#8f9096"],
    ["#b7b7b7"], ["#d5d5d5"], ["#d5d5d5", "#e9dde2"], ["#fcfcfc", "#e9dde2"], ["#fcfcfc"],
    ["#2a2f8d"], ["#05adff"], ["#16a33c"], ["#dfe01a"], ["#c03040"], ["#c03040", "#b24083"],
    ["#b24083"], ["#e18c25"], ["#d9b6b0"], ["#6b6a6e"], ["#d5d5d5"], ["#a9aee2"],
    ["#6b8da8", "#68a8e8"], ["#666f96"], ["#8f9096"], ["#666f96"], ["#555"], ["#6b8da8"],
    ["#258ed9"], ["#a9ddee"], ["#a9ddee", "#d5d5d5"], ["#8f9096", "#b7b7b7"], ["#666f96", "#555"]
];

function drawSwatches() {
    const holder = document.querySelector("#swatches");
    let seed = 7;
    colours.forEach(colour => {
        const button = document.createElement("button");
        const svg = svgNode("svg", { width: 16, height: 16, "shape-rendering": "crispEdges" });
        const base = colour[0] == "none" ? "#fcfcfc" : colour[0];
        svg.appendChild(svgNode("rect", { width: 16, height: 16, fill: base }));
        if (colour[0] == "none") {
            svg.appendChild(svgNode("path", { d: "M2 14L14 2", stroke: "#c03040", "shape-rendering": "auto" }));
        }
        if (colour[1]) {
            let d = "";
            for (let i = 0; i < 64; i++) {
                seed = (seed * 16807) % 2147483647;
                if (seed / 2147483647 < 0.45) d += `M${i % 8 * 2} ${Math.floor(i / 8) * 2}h2v2h-2z`;
            }
            svg.appendChild(svgNode("path", { d: d, fill: colour[1] }));
        }
        button.setAttribute("aria-label", "颜色 " + colour[0]);
        button.appendChild(svg);
        holder.appendChild(button);
    });
}

drawTopRuler();
drawSideRuler();
drawSwatches();
```
